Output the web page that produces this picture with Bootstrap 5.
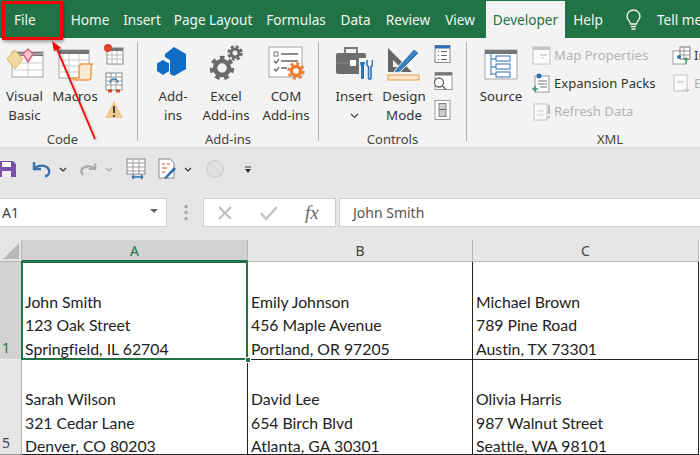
<!DOCTYPE html>
<html lang="en"><head><meta charset="utf-8"><title>Excel</title>
<link href="https://cdn.jsdelivr.net/npm/bootstrap@5.3.0/dist/css/bootstrap.min.css" rel="stylesheet">
<style>
html,body{width:700px;height:455px;overflow:hidden;margin:0;background:#e6e6e6}
body{font-family:"Noto Sans","Open Sans",sans-serif;position:relative;color:#333}
.tabs{height:38px;background:#217346;color:#f1f6f3;font-size:13.6px;padding-top:1px}
.tab{height:37px;line-height:37px;text-align:center;white-space:nowrap;flex:none}
.tab.on{background:#f3f3f3;color:#217346}
.t1{width:64px;text-align:left;padding-left:14px}.t2{width:52px}.t3{width:52px}.t4{width:90px}.t5{width:76px}.t6{width:43px}.t7{width:62px}.t8{width:42px;margin-right:5px}.t9{width:79px}.t10{width:46px}.t11{width:45px}.t12{flex:1;text-align:left;padding-left:1px}
.ribbon{height:111px;background:#f3f3f3;font-size:13.3px;border-bottom:2px solid #e0e0e0;overflow:hidden}
.grp{flex:none;border-right:1px solid #b1b1b1;margin:4px 0 6px;position:relative}
.grp:last-child{border-right:0}
.g1{width:138px}.g2{width:181px}.g3{width:148px}.g4{width:286px}
.g1 .glabel{padding-right:12px}
.btns{height:87px}
.rb{flex:none;text-align:center;line-height:19px;padding-top:3px}
.rb>svg:first-child{display:block;margin:0 auto 6px}
.small{flex:none;margin-top:-2px}
.small svg{display:block;height:28px}
.glabel{text-align:center;line-height:20px;font-size:13px;color:#444}
.item{height:28px;line-height:28px;white-space:nowrap;gap:3px;font-size:13.1px}
.items{margin-top:-1px}
.dis{color:#b4b4b4}
.qat{height:40px;background:#e6e6e6}
.fbar{height:51px;background:#e6e6e6;padding-top:9px}
.box{background:#fff;border:1px solid #d0d0d0;height:29px}
.name{width:167px;font-size:14px;line-height:27px;padding-left:2px;border-left:0;color:#444}
.ctl{width:133px;margin-left:15px}
.fx{flex:1;margin-left:3px;font-size:14px;line-height:27px;padding-left:13px;color:#555;border-right:0}
.fxi{margin-left:27px;font-family:"Liberation Serif",serif;font-size:19px;line-height:27px;color:#666}
.sheet{display:grid;grid-template-columns:22px 226px 225px 226px;grid-template-rows:22px 98px 95px;background:#fff}
.hd{background:#e6e6e6;font-size:14px;text-align:center;color:#444;line-height:22px;border-right:1px solid #b5b5b5;border-bottom:1px solid #b5b5b5}
.hd.sel{background:#d2d2d2;color:#217346;border-bottom:2px solid #217346}
.corner{position:relative;background:#e6e6e6;border-right:1px solid #b5b5b5;border-bottom:1px solid #b5b5b5}
.corner svg{position:absolute;right:2px;bottom:2px}
.rh{background:#e6e6e6;color:#444;font-size:14px;display:flex;align-items:flex-end;justify-content:center;line-height:22px;padding-right:9px;border-right:1px solid #b5b5b5;border-bottom:1px solid #9a9a9a}
.rh.sel{background:#d2d2d2;color:#217346;border-bottom:1px solid #f0f0f0}
.cell{font-family:Lato,sans-serif;font-size:15.8px;font-variant-ligatures:none;line-height:23.5px;color:#222;display:flex;flex-direction:column;padding:27.5px 0 0 3px;border-right:1px solid #222;border-bottom:1px solid #222;white-space:nowrap;overflow:hidden}
.cell.r2{padding-top:27px}
.active{position:relative;overflow:visible}
.active::before{content:"";position:absolute;inset:-1px;border:2px solid #217346;pointer-events:none}
.active::after{content:"";position:absolute;right:-4px;bottom:-4px;background:#217346;border:1px solid #fff;box-sizing:content-box;width:4px;height:4px}
.ov{position:absolute;pointer-events:none}
.callout{left:2px;top:1px;width:61px;height:39px;border:3px solid #f00;box-shadow:1px 2px 3px rgba(0,0,0,.35)}
.arrow{left:0;top:0;filter:drop-shadow(1px 1px 1px rgba(0,0,0,.3))}
</style></head><body>
<div class="tabs d-flex">
<div class="tab t1">File</div><div class="tab t2">Home</div><div class="tab t3">Insert</div><div class="tab t4">Page Layout</div><div class="tab t5">Formulas</div><div class="tab t6">Data</div><div class="tab t7">Review</div><div class="tab t8">View</div><div class="tab t9 on">Developer</div><div class="tab t10">Help</div>
<div class="tab t11 d-flex align-items-center justify-content-center"><svg width="17" height="22" viewBox="0 0 17 22" fill="none" stroke="#f4f8f5" stroke-width="1.3"><path d="M5.500 15C5 12 2 10.500 2 7.500a6.500 6.500 0 0 1 13 0c0 3-3 4.500-3.500 7.500z"/><path d="M6 17.500h5M6.500 20h4"/></svg></div>
<div class="tab t12">Tell me</div></div>

<div class="ribbon d-flex">
<div class="grp g1"><div class="btns d-flex">
<div class="rb" style="width:49px"><svg width="38" height="36" viewBox="0 0 38 36"><rect x="6" y="7" width="31" height="25" fill="#fff" stroke="#a5a5a5"/><rect x="6" y="7" width="31" height="4" fill="#777"/><path d="M14 9h23M6 18h31M6 25h31M22 11v21" stroke="#ccc"/><path d="M1 14l8-9 8 9-8 10z" fill="#f2d9a0" stroke="#e0b060"/><path d="M17 9l5-5 5 5-5 8z" fill="#f5c6cf" stroke="#d9657f" stroke-width="1.500"/></svg>Visual<br>Basic</div>
<div class="rb" style="width:52px"><svg width="38" height="36" viewBox="0 0 38 36"><rect x="3" y="5" width="30" height="28" fill="#fff" stroke="#a5a5a5"/><rect x="3" y="5" width="30" height="4" fill="#777"/><path d="M3 15h30M3 21h30M3 27h30M13 9v24M23 9v24" stroke="#c8c8c8"/><path d="M23 24c0-3 1-5 3-5h11c-2 0-2 3-2 6v7c0 2-1 3-3 3H20c-2 0-3-1-3-2h6z" fill="#fbe9d4" stroke="#ed9a4b" stroke-width="1.500"/></svg>Macros</div>
<div class="small d-flex flex-column" style="width:26px;margin-left:2px">
<svg width="22" height="24" viewBox="0 0 22 24"><rect x="4" y="6" width="16" height="16" fill="#fff" stroke="#888"/><rect x="4" y="6" width="16" height="3" fill="#777"/><path d="M4 13h16M4 17h16M9 9v13M14 9v13" stroke="#bbb"/><circle cx="5" cy="6" r="4" fill="#d8472b"/></svg>
<svg width="22" height="24" viewBox="0 0 22 24"><rect x="3" y="3" width="16" height="17" fill="#fff" stroke="#888"/><path d="M3 7h16M3 11h16M3 15h16M8 3v17M13 3v17" stroke="#999"/><path d="M5 21h4M13 21h4" stroke="#d8472b" stroke-width="3"/><path d="M7 13a4 4 0 0 1 8 0" fill="none" stroke="#3a7fbf" stroke-width="1.500"/></svg>
<svg width="22" height="24" viewBox="0 0 22 24"><path d="M11 3L20 20H2z" fill="#f2c98c"/><path d="M11 8v7M11 17v2" stroke="#444" stroke-width="2"/></svg>
</div></div><div class="glabel">Code</div></div>

<div class="grp g2"><div class="btns d-flex" style="padding-left:12px">
<div class="rb" style="width:46px"><svg style="transform:translateX(-2px)" width="34" height="36" viewBox="0 0 34 36"><path d="M20 2l12 7v15l-12 7-4-2V15l-5-3V9z" fill="#0d6cc4"/><path d="M9 15l6 3.500v7.500L9 30 3 26v-7.500z" fill="#0d6cc4"/></svg>Add-<br>ins</div>
<div class="rb" style="width:60px"><svg width="36" height="36" viewBox="0 0 36 36" fill="none" stroke="#6a6a6a"><circle cx="14" cy="23" r="7" stroke-width="4.500"/><circle cx="14" cy="23" r="10.500" stroke-width="3.500" stroke-dasharray="4.700 4.700"/><circle cx="27" cy="8" r="4" stroke-width="3"/><circle cx="27" cy="8" r="6.500" stroke-width="2.500" stroke-dasharray="3 2.100"/></svg>Excel<br>Add-ins</div>
<div class="rb" style="width:60px"><svg width="38" height="36" viewBox="0 0 38 36"><rect x="2" y="2" width="33" height="30" fill="#fff" stroke="#a5a5a5"/><rect x="7" y="7" width="4" height="4" fill="none" stroke="#777"/><path d="M14 9h17M14 16h17M14 23h6M7 16l2 2 3-4M7 24l2 2 3-4" fill="none" stroke="#666" stroke-width="1.300"/><circle cx="29" cy="26" r="4.500" fill="none" stroke="#ed7d31" stroke-width="3.500"/><circle cx="29" cy="26" r="7.500" fill="none" stroke="#ed7d31" stroke-width="2.500" stroke-dasharray="3 2.900"/></svg>COM<br>Add-ins</div>
</div><div class="glabel">Add-ins</div></div>

<div class="grp g3"><div class="btns d-flex" style="padding-left:11px">
<div class="rb" style="width:48px"><svg width="38" height="36" viewBox="0 0 38 36"><path d="M10 8V3h12v5" fill="none" stroke="#777" stroke-width="1.800"/><rect x="1" y="8" width="30" height="21" rx="2" fill="#6d6d6d"/><path d="M1 18h30" stroke="#8a8a8a"/><rect x="15" y="15" width="6" height="6" fill="#fff"/><rect x="24" y="13" width="14" height="23" fill="#f3f3f3"/><path d="M25 17l1 5v11c0 1.500 3 1.500 3 0V22l1-5z" fill="#2a70b8"/><path d="M32 15v5l1.500 2v11c0 1.500 2.500 1.500 2.500 0V22l1.500-2v-5" fill="none" stroke="#2a70b8" stroke-width="1.600"/></svg>Insert<br><svg width="9" height="6" viewBox="0 0 9 6" fill="none" stroke="#444" stroke-width="1.200"><path d="M1 1l3.500 3.500L8 1"/></svg></div>
<div class="rb" style="width:52px"><svg width="38" height="36" viewBox="0 0 38 36"><path d="M3 3v24h24z" fill="#666"/><path d="M8 15v7h7z" fill="#f3f3f3"/><path d="M10 25L29 4l5 4-19 19-6 1z" fill="#3a7fbf" stroke="#f3f3f3"/><rect x="3" y="30" width="31" height="5" fill="#fbe6cf" stroke="#ed9a4b"/></svg>Design<br>Mode</div>
<div class="small d-flex flex-column" style="width:28px;margin-left:0">
<svg width="24" height="23" viewBox="0 0 24 23"><rect x="5" y="3" width="15" height="17" fill="#fff" stroke="#888"/><rect x="5" y="3" width="15" height="3" fill="#2a70b8"/><path d="M8 9h1M8 13h1M8 17h1M11 9h6M11 13h6M11 17h6" stroke="#666"/></svg>
<svg width="24" height="23" viewBox="0 0 24 23"><rect x="5" y="2" width="17" height="17" fill="#fff" stroke="#999"/><rect x="5" y="2" width="17" height="3" fill="#777"/><circle cx="9" cy="12" r="4.500" fill="#fff" stroke="#666" stroke-width="1.300"/><path d="M12 15l4 4" stroke="#666" stroke-width="1.500"/></svg>
<svg width="24" height="23" viewBox="0 0 24 23"><rect x="5" y="2" width="15" height="19" fill="#fff" stroke="#999"/><rect x="9" y="5" width="7" height="13" fill="#ccc" stroke="#888"/><path d="M9 11h7" stroke="#666"/></svg>
</div></div><div class="glabel">Controls</div></div>

<div class="grp g4"><div class="btns d-flex" style="padding-left:8px">
<div class="rb" style="width:52px"><svg width="36" height="36" viewBox="0 0 36 36"><rect x="2" y="5" width="32" height="29" fill="#fff" stroke="#a5a5a5"/><rect x="2" y="5" width="32" height="4" fill="#777"/><path d="M8 9v21M8 14h5M8 22h5M8 29h5" stroke="#2a70b8" fill="none"/><rect x="13" y="11" width="14" height="5" fill="#fff" stroke="#2a70b8"/><rect x="13" y="19" width="14" height="5" fill="#fff" stroke="#2a70b8"/><rect x="13" y="27" width="14" height="5" fill="#fff" stroke="#2a70b8"/></svg>Source</div>
<div class="items d-flex flex-column" style="width:136px;margin-left:4px">
<div class="item d-flex align-items-center dis"><svg width="20" height="20" viewBox="0 0 20 20"><rect x="2" y="2" width="17" height="17" fill="#fafafa" stroke="#c4c4c4"/><rect x="2" y="2" width="17" height="3" fill="#c4c4c4"/><path d="M9 10h7M11 13h2" stroke="#bbb"/></svg>Map Properties</div>
<div class="item d-flex align-items-center"><svg width="20" height="20" viewBox="0 0 20 20"><rect x="4" y="3" width="14" height="16" fill="#fff" stroke="#999"/><path d="M7 8h9M7 11h9M9 14h7" stroke="#777"/><circle cx="8" cy="3" r="2.500" fill="#2a70b8"/><path d="M1 16h6M4 13v6" stroke="#3c9a6d" stroke-width="1.600"/></svg>Expansion Packs</div>
<div class="item d-flex align-items-center dis"><svg width="20" height="20" viewBox="0 0 20 20"><rect x="3" y="3" width="13" height="16" fill="#fafafa" stroke="#c4c4c4"/><path d="M6 10h7M6 14h7" stroke="#ccc"/><path d="M18 4v9M18 15v2" stroke="#bbb" stroke-width="2"/></svg>Refresh Data</div>
</div>
<div class="items d-flex flex-column" style="margin-left:4px">
<div class="item d-flex align-items-center"><svg width="20" height="20" viewBox="0 0 20 20"><rect x="2" y="6" width="13" height="13" fill="#fff" stroke="#999"/><rect x="9" y="2" width="10" height="12" fill="#fff" stroke="#777"/><path d="M9 6h10M9 10h10M13 2v12" stroke="#999"/><circle cx="8" cy="12" r="2" fill="#2a70b8"/><path d="M15 19v-6M13 15l2-2 2 2" stroke="#3c9a6d" fill="none" stroke-width="1.400"/></svg>Import</div>
<div class="item d-flex align-items-center dis"><svg width="20" height="20" viewBox="0 0 20 20"><rect x="3" y="2" width="13" height="16" fill="#fafafa" stroke="#c4c4c4"/><path d="M6 9h7M12 17h6M16 15l2 2-2 2" stroke="#bbb" fill="none"/></svg>Export</div>
</div>
</div><div class="glabel">XML</div></div>
</div>

<div class="qat d-flex align-items-center">
<svg width="17" height="20" viewBox="0 0 17 20" style="margin-left:-1px"><path d="M0 2h14l3 3v13H0z" fill="#7b52ab"/><rect x="3" y="3" width="9" height="5" fill="#fff"/><rect x="3" y="12" width="9" height="6" fill="#f0ecf5"/></svg>
<svg style="margin-left:16px" width="20" height="20" viewBox="0 0 20 20" fill="none" stroke="#3a72ad" stroke-width="2.400"><path d="M2 3v7h7"/><path d="M3 9.500c3-4 12-4 14 1.500 1 3-1 5.500-4 6.500"/></svg>
<svg style="margin-left:7px" width="8" height="5" viewBox="0 0 8 5" fill="none" stroke="#333" stroke-width="1.200"><path d="M1 1l3 3 3-3"/></svg>
<svg style="margin-left:12px" width="18" height="20" viewBox="0 0 20 20" fill="none" stroke="#aaa" stroke-width="2.400"><path d="M18 4v6h-7"/><path d="M17 9.500c-3-3.500-11-3.500-14 1-1 2 0 5 2 6"/></svg>
<svg style="margin-left:8px" width="8" height="5" viewBox="0 0 8 5" fill="none" stroke="#aaa" stroke-width="1.200"><path d="M1 1l3 3 3-3"/></svg>
<svg style="margin-left:12px" width="22" height="22" viewBox="0 0 22 22"><rect x="2" y="1" width="18" height="15" fill="#fff" stroke="#888"/><path d="M2 5h18M2 9h18M2 13h18M8 1v15M14 1v15" stroke="#999"/><path d="M7 19h11M7 19l2-2M7 19l2 2M18 19l-2-2M18 19l-2 2" stroke="#2a70b8" stroke-width="1.300" fill="none"/></svg>
<svg style="margin-left:10px" width="20" height="22" viewBox="0 0 20 22"><path d="M2 1h11l4 4v15H2z" fill="#fff" stroke="#888"/><path d="M5 6h3M10 6h3M5 10h5M5 14h3" stroke="#d8472b" stroke-width="1.200"/><path d="M7 20l10-11 2 2-10 10z" fill="#2a70b8"/></svg>
<svg style="margin-left:7px" width="8" height="5" viewBox="0 0 8 5" fill="none" stroke="#333" stroke-width="1.200"><path d="M1 1l3 3 3-3"/></svg>
<svg style="margin-left:14px" width="18" height="18" viewBox="0 0 18 18"><circle cx="9" cy="9" r="8.300" fill="#e2dfe2" stroke="#c4c4c4"/></svg>
<svg style="margin-left:21px" width="6" height="7" viewBox="0 0 6 7"><path d="M0 1h6" stroke="#333"/><path d="M0 3h6L3 7z" fill="#333"/></svg>
</div>

<div class="fbar d-flex align-items-start">
<div class="box name d-flex justify-content-between">A1<svg class="me-2 mt-2" width="8" height="8" viewBox="0 0 8 8"><path d="M0 2h8L4 6z" fill="#666"/></svg></div>
<svg style="margin:7px 0 0 17px" width="4" height="15" viewBox="0 0 4 15" fill="#aaa"><rect width="3" height="3" x="0.500"/><rect width="3" height="3" x="0.500" y="6"/><rect width="3" height="3" x="0.500" y="12"/></svg>
<div class="box ctl d-flex align-items-center">
<svg style="margin-left:13px" width="16" height="16" viewBox="0 0 16 16" fill="none" stroke="#bbb" stroke-width="1.800"><path d="M2 2l12 12M14 2L2 14"/></svg>
<svg style="margin-left:27px" width="18" height="16" viewBox="0 0 18 16" fill="none" stroke="#c4c4c4" stroke-width="2.400"><path d="M1 8l5 6L17 2"/></svg>
<i class="fxi">fx</i>
</div>
<div class="box fx">John Smith</div>
</div>

<div class="sheet">
<div class="corner"><svg width="16" height="16" viewBox="0 0 16 16"><path d="M16 0v16H0z" fill="#b8b8b8"/></svg></div>
<div class="hd sel">A</div><div class="hd">B</div><div class="hd">C</div>
<div class="rh sel">1</div>
<div class="cell active"><div>John Smith</div><div>123 Oak Street</div><div>Springfield, IL 62704</div></div>
<div class="cell"><div>Emily Johnson</div><div>456 Maple Avenue</div><div>Portland, OR 97205</div></div>
<div class="cell"><div>Michael Brown</div><div>789 Pine Road</div><div>Austin, TX 73301</div></div>
<div class="rh">5</div>
<div class="cell r2"><div>Sarah Wilson</div><div>321 Cedar Lane</div><div>Denver, CO 80203</div></div>
<div class="cell r2"><div>David Lee</div><div>654 Birch Blvd</div><div>Atlanta, GA 30301</div></div>
<div class="cell r2"><div>Olivia Harris</div><div>987 Walnut Street</div><div>Seattle, WA 98101</div></div>
</div>

<div class="ov callout"></div>
<svg class="ov arrow" width="110" height="150" viewBox="0 0 110 150"><path d="M95 139L57 49" stroke="#f00" stroke-width="1.800"/><path d="M52 41l9 7-7 3z" fill="#f00"/></svg>
</body></html>
